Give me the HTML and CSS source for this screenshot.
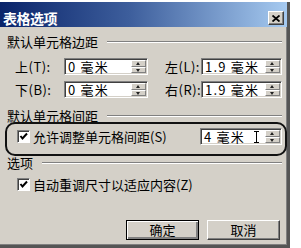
FILE: index.html
```html
<!DOCTYPE html>
<html lang="zh-CN">
<head>
    <meta charset="UTF-8">
    <title>表格选项</title>
    <link rel="stylesheet" href="styles.css">
</head>
<body>

    <div class="dialog">
        <div class="titlebar">
            <span class="title">表格选项</span>
            <span class="close">
                <svg width="8" height="7" viewBox="0 0 8 7"><path d="M0.5 0.5 L7.5 6.5 M7.5 0.5 L0.5 6.5" stroke="#000" stroke-width="1.8"/></svg>
            </span>
        </div>

        <div class="content">
            <!-- 默认单元格边距 -->
            <div class="group-head"><span>默认单元格边距</span><i class="rule"></i></div>
            <div class="margins">
                <label>上(T):</label>
                <div class="spin"><span class="val">0 毫米</span><span class="arrows"><b class="up"></b><b class="down"></b></span></div>
                <span></span>
                <label>左(L):</label>
                <div class="spin"><span class="val">1.9 毫米</span><span class="arrows"><b class="up"></b><b class="down"></b></span></div>

                <label>下(B):</label>
                <div class="spin"><span class="val">0 毫米</span><span class="arrows"><b class="up"></b><b class="down"></b></span></div>
                <span></span>
                <label>右(R):</label>
                <div class="spin"><span class="val">1.9 毫米</span><span class="arrows"><b class="up"></b><b class="down"></b></span></div>
            </div>

            <!-- 默认单元格间距 -->
            <div class="group-head gap-head"><span>默认单元格间距</span><i class="rule"></i></div>
            <div class="spacing-row">
                <span class="checkbox"><svg width="9" height="9" viewBox="0 0 9 9"><path d="M1.5 4 L3.5 6.5 L8 1.5" fill="none" stroke="#000" stroke-width="2"/></svg></span>
                <span class="check-text wide">允许调整单元格间距(S)</span>
                <div class="spin spin-gap"><span class="val">4 毫米</span><span class="ibeam"></span><span class="arrows"><b class="up"></b><b class="down"></b></span></div>
            </div>

            <!-- 选项 -->
            <div class="group-head opt-head"><span>选项</span><i class="rule"></i></div>
            <div class="auto-row">
                <span class="checkbox"><svg width="9" height="9" viewBox="0 0 9 9"><path d="M1.5 4 L3.5 6.5 L8 1.5" fill="none" stroke="#000" stroke-width="2"/></svg></span>
                <span class="check-text">自动重调尺寸以适应内容(Z)</span>
            </div>

            <div class="btn-row">
                <button class="btn default-btn">确定</button>
                <button class="btn">取消</button>
            </div>
        </div>

        <div class="mark"></div>
    </div>

</body>
</html>
```

FILE: styles.css
```css
* {
    box-sizing: border-box;
}
body {
    margin: 0;
    background: #fff;
    font-family: "Noto Sans CJK SC", "Noto Sans", sans-serif;
}
.dialog {
    position: relative;
    margin-top: 2px;
    width: 290px;
    height: 246px;
    background: #d4d0c8;
    border-right: 3px solid #555;
    border-bottom: 3px solid #555;
    box-shadow: inset -1px -1px 0 #808080;
}
.titlebar {
    display: flex;
    align-items: center;
    justify-content: space-between;
    height: 25px;
    padding: 9px 3px 2px 3px;
    background: linear-gradient(to right, #0a246a, #3d5e9c 45%, #a6caf0);
}
.title {
    color: #fff;
    font-weight: bold;
    font-size: 14px;
    line-height: 14px;
    letter-spacing: -0.5px;
}
.close {
    display: flex;
    align-items: center;
    justify-content: center;
    width: 16px;
    height: 14px;
    background: #d4d0c8;
    border: 1px solid;
    border-color: #fff #404040 #404040 #fff;
    box-shadow: inset -1px -1px 0 #808080;
}
.content {
    width: 287px;
    padding: 0 5px 0 7px;
    font-size: 13px;
    color: #000;
}
.group-head {
    display: flex;
    align-items: center;
    gap: 9px;
    height: 16px;
    line-height: 16px;
    margin-top: 7px;
}
.rule {
    flex: 1;
    height: 2px;
    border-top: 1px solid #808080;
    border-bottom: 1px solid #fff;
}
.gap-head {
    margin-top: 10px;
}
.opt-head {
    margin-top: 10px;
}
.margins {
    display: grid;
    grid-template-columns: 49px 84px 17px 36px 81px;
    row-gap: 6px;
    padding-left: 8px;
    margin-top: 8px;
}
.margins label {
    line-height: 17px;
    white-space: nowrap;
    letter-spacing: 0.5px;
}
.spin {
    display: flex;
    align-items: center;
    height: 17px;
    padding: 1px 1px 1px 2px;
    background: #fff;
    border: 1px solid;
    border-color: #808080 #fff #fff #808080;
    box-shadow: inset 1px 1px 0 #404040, inset -1px -1px 0 #d4d0c8;
    font-size: 13px;
    line-height: 13px;
}
.val {
    padding-left: 1px;
    white-space: nowrap;
    letter-spacing: 1.2px;
}
.arrows {
    display: flex;
    flex-direction: column;
    margin-left: auto;
    width: 15px;
    height: 13px;
}
.arrows b {
    flex: 1;
    position: relative;
    background: #d4d0c8;
    border: 1px solid;
    border-color: #fff #808080 #808080 #fff;
}
.arrows b::after {
    content: "";
    position: absolute;
    left: 4px;
    top: 1px;
    border-left: 2.5px solid transparent;
    border-right: 2.5px solid transparent;
}
.up::after {
    border-bottom: 3px solid #222;
}
.down::after {
    border-top: 3px solid #222;
}
.spacing-row {
    display: flex;
    align-items: center;
    height: 17px;
    margin-top: 4px;
    padding-left: 10px;
}
.auto-row {
    display: flex;
    align-items: center;
    height: 15px;
    margin-top: 6px;
    padding-left: 10px;
}
.checkbox {
    display: flex;
    flex: none;
    align-items: center;
    justify-content: center;
    width: 13px;
    height: 13px;
    background: #fff;
    border: 1px solid;
    border-color: #808080 #fff #fff #808080;
    box-shadow: inset 1px 1px 0 #404040;
}
.check-text {
    margin-left: 3px;
    white-space: nowrap;
}
.wide {
    flex: none;
    width: 167px;
}
.spin-gap {
    flex: none;
    width: 82px;
}
.ibeam {
    width: 5px;
    height: 12px;
    margin-left: 9px;
    border-top: 1px solid #000;
    border-bottom: 1px solid #000;
    background: linear-gradient(#000, #000) center / 1px 100% no-repeat;
}
.btn-row {
    display: flex;
    justify-content: flex-end;
    gap: 8px;
    margin-top: 28px;
    padding-right: 2px;
}
.btn {
    width: 73px;
    height: 20px;
    padding: 0;
    background: #d4d0c8;
    border: 1px solid;
    border-color: #fff #404040 #404040 #fff;
    box-shadow: inset -1px -1px 0 #808080;
    font-family: "Noto Sans CJK SC", sans-serif;
    font-size: 13px;
    line-height: 16px;
    color: #000;
}
.default-btn {
    border: 1px solid #000;
    box-shadow: inset 1px 1px 0 #fff, inset -2px -2px 0 #808080;
}
.mark {
    position: absolute;
    left: 5px;
    top: 120px;
    width: 282px;
    height: 34px;
    border: 2px solid #111;
    border-radius: 10px;
}
```
